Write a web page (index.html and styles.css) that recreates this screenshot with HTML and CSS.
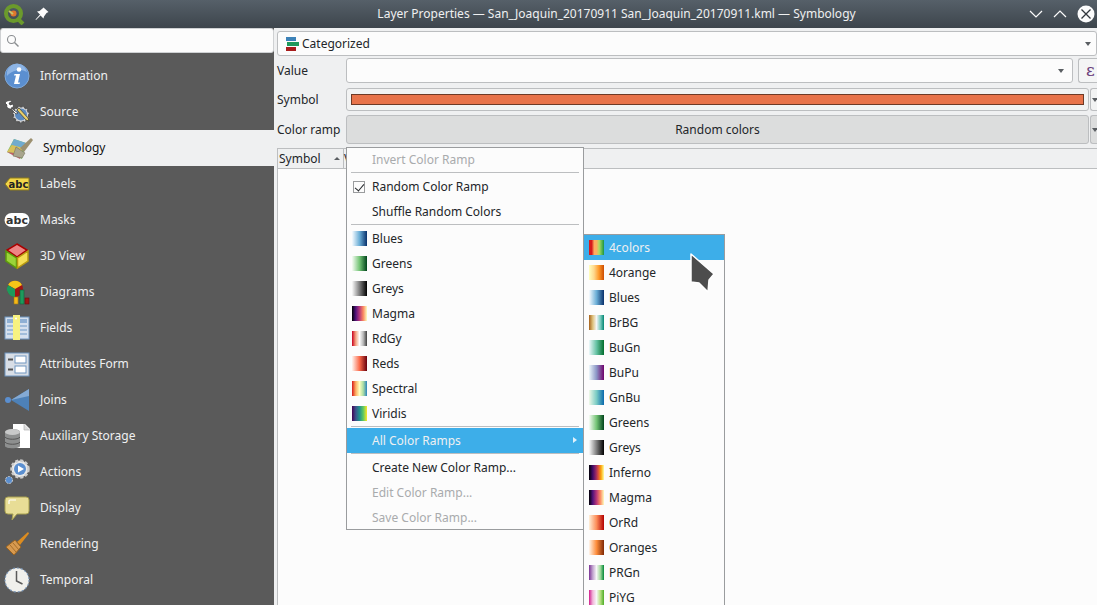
FILE: index.html
```html
<!DOCTYPE html>
<html lang="en">
<head>
<meta charset="utf-8">
<title>Layer Properties</title>
<link rel="stylesheet" href="styles.css">
</head>
<body>
<div class="window">
  <header class="titlebar">
    <div class="tb-left">
      <svg class="qgis" width="22" height="22" viewBox="0 0 22 22"><circle cx="10.500" cy="10.500" r="7.500" fill="none" stroke="#6b9a2c" stroke-width="4"/><path d="M14 15l6 6" stroke="#6b9a2c" stroke-width="4"/><circle cx="10.500" cy="10.500" r="3" fill="#e0762c"/><path d="M6 8l4 3" stroke="#c9c36a" stroke-width="2"/></svg>
      <svg width="16" height="16" viewBox="0 0 16 16"><path d="M9.500 1.500l5 4.500-2 1-2.500 3.500-.5 2-3-3L2 14l-.5-.5L6 8.500l-3-3 2.500-.5 3-2.500z" fill="#fcfcfc"/></svg>
    </div>
    <div class="tb-title">Layer Properties — San_Joaquin_20170911 San_Joaquin_20170911.kml — Symbology</div>
    <div class="tb-right">
      <svg width="14" height="14" viewBox="0 0 14 14"><path d="M1 4l6 6 6-6" fill="none" stroke="#fcfcfc" stroke-width="1.200"/></svg>
      <svg width="14" height="14" viewBox="0 0 14 14"><path d="M1 10l6-6 6 6" fill="none" stroke="#fcfcfc" stroke-width="1.200"/></svg>
      <svg width="18" height="18" viewBox="0 0 18 18"><circle cx="9" cy="9" r="8.500" fill="#fcfcfc"/><path d="M4.500 4.500l9 9M13.500 4.500l-9 9" stroke="#31363b" stroke-width="1.300"/></svg>
    </div>
  </header>
  <div class="body">
    <aside class="sidebar">
      <div class="search">
        <svg width="14" height="14" viewBox="0 0 14 14"><circle cx="5.500" cy="5.500" r="4" fill="none" stroke="#8a8d90" stroke-width="1.100"/><path d="M8.500 8.500l4 4" stroke="#8a8d90" stroke-width="1.500"/></svg>
      </div>
      <nav class="nav">
        <div class="nav-item"><svg class="ic" viewBox="0 0 26 26"><circle cx="13" cy="13" r="12" fill="#5b8fd0" stroke="#7fa8d8"/><path d="M3 13A10 10 0 0 1 23 9 16 16 0 0 0 3 13z" fill="#8db4e4"/><circle cx="15" cy="6.500" r="2.300" fill="#fff"/><path d="M10.500 11h5.500l-2 8.500h2l-.5 1.500h-5.500l2-8.500h-2z" fill="#fff"/></svg><span>Information</span></div>
        <div class="nav-item"><svg class="ic" viewBox="0 0 26 26"><circle cx="17" cy="15.500" r="8" fill="#d6d7d8" stroke="#555" stroke-dasharray="3 1.500" stroke-width="2"/><circle cx="17" cy="15.500" r="6" fill="#5a8ac0"/><path d="M13 11l9 10 3 1-1-3-9-10z" fill="#e8cf6a" stroke="#3a3a30" stroke-width=".7"/><path d="M1 4c2-3 6-3 7-1l-3 1 1 2 3-1c1 2 0 4-2 4L14 14l-2 1-5-5C4 10 2 8 3 6z" fill="#fff" stroke="#333" stroke-width=".7"/></svg><span>Source</span></div>
        <div class="nav-item active"><svg class="ic sym" viewBox="0 0 28 26"><path d="M1 17L8 4l12 4-4 16z" fill="#7fc06a"/><path d="M8 4l12 4-2 6L5 10z" fill="#71abcf"/><path d="M1 17l5-7 11 3-2 6z" fill="#d8c05a"/><path d="M1 17l14 2-1 5z" fill="#c25f66"/><path d="M14 13l11-10 2 2-9 12z" fill="#9c9070"/><path d="M10 12l9 6-3 5-9-2z" fill="#a8a58d" stroke="#77745e" stroke-width=".6"/></svg><span>Symbology</span></div>
        <div class="nav-item"><svg class="ic" viewBox="0 0 26 26"><path d="M1 13l5-6h19v12H6z" fill="#f2d649" stroke="#8c7a1c"/><text x="14.500" y="17" class="ic-text">abc</text></svg><span>Labels</span></div>
        <div class="nav-item"><svg class="ic" viewBox="0 0 26 26"><rect x=".5" y="6" width="25" height="14" rx="7" fill="#fff"/><text x="13" y="17" class="ic-text dark">abc</text></svg><span>Masks</span></div>
        <div class="nav-item"><svg class="ic" viewBox="0 0 26 26"><path d="M13 1l10 6-10 7L3 7z" fill="#ee8585" stroke="#a00" stroke-width="1.500"/><path d="M2 8l10.500 7v10L2 18z" fill="#9bd439" stroke="#5d9a0c" stroke-width="1.500"/><path d="M24 8l-10.500 7v10L24 18z" fill="#f5de55" stroke="#b89a10" stroke-width="1.500"/></svg><span>3D View</span></div>
        <div class="nav-item"><svg class="ic" viewBox="0 0 26 26"><circle cx="11" cy="10" r="8" fill="#a01414"/><path d="M11 10L4 6a8 8 0 0 1 14 0z" fill="#f5c518"/><path d="M11 10v8a8 8 0 0 1-7-12z" fill="#1d9a5c"/><rect x="10" y="18" width="4" height="7" fill="#f5b818" stroke="#a07810" stroke-width=".6"/><rect x="16" y="11" width="4" height="14" fill="#1d9a5c" stroke="#0f6038" stroke-width=".6"/><rect x="21" y="19" width="4" height="6" fill="#a01414" stroke="#601010" stroke-width=".6"/></svg><span>Diagrams</span></div>
        <div class="nav-item"><svg class="ic" viewBox="0 0 26 26"><rect x="1" y="2" width="24" height="22" fill="#d5e0ee" stroke="#6f95bf"/><rect x="3" y="4" width="20" height="4" fill="#8fb0d4"/><path d="M3 11h20M3 15h20M3 19h20" stroke="#8fb0d4" stroke-width="1.500"/><rect x="9" y="0" width="7" height="25" fill="#f7f280"/><circle cx="12" cy="3.500" r="1" fill="#fff"/></svg><span>Fields</span></div>
        <div class="nav-item"><svg class="ic" viewBox="0 0 26 26"><rect x="1" y="2" width="24" height="23" fill="#d8dee6" stroke="#6f95bf"/><rect x="11" y="5" width="11" height="7" fill="#fff" stroke="#6f95bf"/><rect x="11" y="15" width="11" height="7" fill="#fff" stroke="#6f95bf"/><path d="M4 8.500h5M4 18.500h5" stroke="#555" stroke-width="2"/></svg><span>Attributes Form</span></div>
        <div class="nav-item"><svg class="ic" viewBox="0 0 26 26"><circle cx="4" cy="13" r="3" fill="#5b8fd0"/><path d="M7 13L25 2v22z" fill="#4d81b8"/><path d="M7 13L25 2v7z" fill="#84aad4"/></svg><span>Joins</span></div>
        <div class="nav-item"><svg class="ic" viewBox="0 0 26 26"><path d="M9 1h12l5 5v19H9z" fill="#fff"/><path d="M20 1v6h6" fill="#ddd" stroke="#aaa" stroke-width=".6"/><path d="M1 9c0-4 15-4 15 0v14c0 3-15 3-15 0z" fill="#8d8f8f"/><ellipse cx="8.500" cy="9" rx="7.500" ry="3" fill="#c8c9c9"/><path d="M1 14c2 3 13 3 15 0M1 19c2 3 13 3 15 0" fill="none" stroke="#555"/></svg><span>Auxiliary Storage</span></div>
        <div class="nav-item"><svg class="ic" viewBox="0 0 26 26"><circle cx="16" cy="10" r="8.500" fill="#e8e8e8" stroke="#ccc" stroke-width="2.500" stroke-dasharray="3 2"/><circle cx="16" cy="10" r="6" fill="#5b8fd0"/><path d="M14 6.500l6 3.500-6 3.500z" fill="#fff"/><circle cx="5" cy="21" r="3.500" fill="#5b8fd0" stroke="#ccc" stroke-dasharray="2 1"/></svg><span>Actions</span></div>
        <div class="nav-item"><svg class="ic" viewBox="0 0 26 26"><path d="M4 2h18a3 3 0 0 1 3 3v11a3 3 0 0 1-3 3H13l-5 6 1-6H4a3 3 0 0 1-3-3V5a3 3 0 0 1 3-3z" fill="#e8dd96" stroke="#a8a050"/><path d="M5 9V6a1 1 0 0 1 1-1h6" fill="none" stroke="#fff" stroke-width="1.200"/></svg><span>Display</span></div>
        <div class="nav-item"><svg class="ic" viewBox="0 0 26 26"><path d="M13 11L24 1l1 1.500L16 14z" fill="#dc8c20"/><path d="M2 16l9-7 6 7-7 8z" fill="#d89a50" stroke="#9a6420"/><path d="M6 14l6 7M9 12l6 7" stroke="#9a6420" stroke-width=".8"/></svg><span>Rendering</span></div>
        <div class="nav-item"><svg class="ic" viewBox="0 0 26 26"><circle cx="13" cy="13" r="12" fill="#f0f0ec" stroke="#7b97b8" stroke-width="1.200" stroke-dasharray="2 2"/><path d="M12.500 4v10l6 3" fill="none" stroke="#5a5a5a" stroke-width="1.500"/></svg><span>Temporal</span></div>
      </nav>
    </aside>
    <main class="panel">
      <div class="combo render"><svg width="14" height="14" viewBox="0 0 14 14"><rect x="1" y="0" width="10" height="4" fill="#3c82b8"/><rect x="2" y="5" width="12" height="4" fill="#1f9a5c"/><rect x="1" y="10" width="10" height="4" fill="#a81c1c"/></svg><span>Categorized</span><i class="arrow push"></i></div>
      <div class="row">
        <label>Value</label>
        <div class="field"><i class="arrow push"></i></div>
        <div class="expr">ε</div>
      </div>
      <div class="row">
        <label>Symbol</label>
        <div class="field sym-btn"><div class="sym-bar"></div></div>
        <div class="side-arrow"><i class="arrow"></i></div>
      </div>
      <div class="row ramp">
        <label>Color ramp</label>
        <div class="ramp-btn">Random colors</div>
        <div class="side-arrow grey"><i class="arrow"></i></div>
      </div>
      <div class="table">
        <div class="thead"><div class="th-sym">Symbol<i class="sort"></i></div><div class="th-val">Value</div></div>
        <div class="tbody"></div>
      </div>
    </main>
  </div>

  <div class="menu main-menu">
    <div class="mi off"><span>Invert Color Ramp</span></div>
    <div class="sep"></div>
    <div class="mi"><i class="check"></i><span>Random Color Ramp</span></div>
    <div class="mi"><span>Shuffle Random Colors</span></div>
    <div class="sep"></div>
    <div class="mi"><i class="sw blues"></i><span>Blues</span></div>
    <div class="mi"><i class="sw greens"></i><span>Greens</span></div>
    <div class="mi"><i class="sw greys"></i><span>Greys</span></div>
    <div class="mi"><i class="sw magma"></i><span>Magma</span></div>
    <div class="mi"><i class="sw rdgy"></i><span>RdGy</span></div>
    <div class="mi"><i class="sw reds"></i><span>Reds</span></div>
    <div class="mi"><i class="sw spectral"></i><span>Spectral</span></div>
    <div class="mi"><i class="sw viridis"></i><span>Viridis</span></div>
    <div class="sep"></div>
    <div class="mi hot"><span>All Color Ramps</span><i class="more"></i></div>
    <div class="sep"></div>
    <div class="mi"><span>Create New Color Ramp...</span></div>
    <div class="mi off"><span>Edit Color Ramp...</span></div>
    <div class="mi off"><span>Save Color Ramp...</span></div>
  </div>

  <div class="menu sub-menu">
    <div class="mi hot"><i class="sw c4"></i><span>4colors</span></div>
    <div class="mi"><i class="sw o4"></i><span>4orange</span></div>
    <div class="mi"><i class="sw blues"></i><span>Blues</span></div>
    <div class="mi"><i class="sw brbg"></i><span>BrBG</span></div>
    <div class="mi"><i class="sw bugn"></i><span>BuGn</span></div>
    <div class="mi"><i class="sw bupu"></i><span>BuPu</span></div>
    <div class="mi"><i class="sw gnbu"></i><span>GnBu</span></div>
    <div class="mi"><i class="sw greens"></i><span>Greens</span></div>
    <div class="mi"><i class="sw greys"></i><span>Greys</span></div>
    <div class="mi"><i class="sw inferno"></i><span>Inferno</span></div>
    <div class="mi"><i class="sw magma"></i><span>Magma</span></div>
    <div class="mi"><i class="sw orrd"></i><span>OrRd</span></div>
    <div class="mi"><i class="sw oranges"></i><span>Oranges</span></div>
    <div class="mi"><i class="sw prgn"></i><span>PRGn</span></div>
    <div class="mi"><i class="sw piyg"></i><span>PiYG</span></div>
  </div>

  <svg class="cursor" width="26" height="42" viewBox="0 0 26 42"><path d="M2 2v28l8 1 9 9 1-12 5-6z" fill="#4d4d4d" stroke="#fff" stroke-width="1.500" stroke-linejoin="round"/></svg>
</div>
</body>
</html>
```
FILE: styles.css
```css
* { box-sizing: border-box; }
html, body { margin: 0; height: 100%; overflow: hidden; }
body { font: 12px/16px "Noto Sans", sans-serif; color: #232629; background: #eff0f1; }
.window { position: relative; width: 1097px; height: 605px; overflow: hidden; display: flex; flex-direction: column; }

.titlebar { height: 28px; flex: none; display: flex; align-items: center; background: linear-gradient(#566069, #3d454c); color: #eff0f1; padding: 0 2px 0 3px; }
.tb-left { display: flex; align-items: center; gap: 9px; width: 300px; }
.tb-title { flex: 1; text-align: center; padding-right: 99px; white-space: nowrap; }
.tb-right { display: flex; align-items: center; gap: 10px; }

.body { flex: 1; display: flex; min-height: 0; }
.sidebar { width: 274px; flex: none; background: #5a5a5a; display: flex; flex-direction: column; }
.search { height: 25px; background: #fcfcfc; border: 1px solid #cfd1d3; border-radius: 3px; display: flex; align-items: center; padding-left: 5px; margin-bottom: 5px; }
.nav { display: flex; flex-direction: column; }
.nav-item { height: 36px; display: flex; align-items: center; gap: 10px; padding-left: 4px; color: #eff0f1; }
.nav-item.active { background: #eff0f1; color: #111; }
.ic { width: 26px; height: 26px; flex: none; }
.ic.sym { width: 28px; margin-left: 2px; margin-right: -1px; }
.ic-text { font: bold 10px "DejaVu Sans", sans-serif; text-anchor: middle; fill: #222; }
.ic-text.dark { font-size: 11px; fill: #333; }

.panel { flex: 1; min-width: 0; padding: 3px 0 0 3px; display: flex; flex-direction: column; background: #eff0f1; }
.combo { height: 25px; background: #fcfcfc; border: 1px solid #bcbec0; border-radius: 3px; display: flex; align-items: center; gap: 3px; padding: 0 5px 0 7px; margin-right: 0; flex: none; }
.push { margin-left: auto; }
.arrow { display: block; width: 0; height: 0; border: 3px solid transparent; border-top: 4px solid #5a5e62; border-bottom: 0; }

.row { display: flex; align-items: center; height: 29px; flex: none; }
.row:first-of-type { margin-top: 3px; }
.row label { width: 69px; flex: none; }
.field { width: 727px; height: 25px; flex: none; background: #fcfcfc; border: 1px solid #bcbec0; border-radius: 3px; display: flex; align-items: center; padding-right: 8px; }
.expr { width: 30px; height: 25px; margin-left: 5px; flex: none; background: #f4f5f5; border: 1px solid #bcbec0; border-radius: 3px 0 0 3px; border-right: 0; color: #6a3d7a; font: 17px/22px "DejaVu Serif", serif; padding-left: 7px; }
.sym-btn { width: 743px; height: 23px; padding: 0 4px; background: #f2f3f3; }
.sym-bar { flex: 1; height: 11px; background: #e8734a; border: 1px solid #6e3a26; }
.side-arrow { width: 9px; flex: none; height: 23px; margin-left: 1px; border: 1px solid #bcbec0; border-right: 0; border-radius: 3px 0 0 3px; display: flex; align-items: center; padding-left: 1px; background: #f2f3f3; }
.ramp { height: 31px; }
.ramp-btn { width: 743px; height: 29px; flex: none; background: #dcdddd; border: 1px solid #bcbec0; border-radius: 3px; text-align: center; line-height: 27px; }
.side-arrow.grey { height: 29px; background: #dcdddd; }

.table { flex: 1; display: flex; flex-direction: column; margin: 3px 0 0 0; border: 1px solid #bcbec0; border-right: 0; border-bottom: 0; min-height: 0; }
.thead { height: 20px; flex: none; display: flex; background: #eff0f1; border-bottom: 1px solid #bcbec0; }
.th-sym { width: 66px; padding-left: 1px; line-height: 20px; border-right: 1px solid #bcbec0; display: flex; align-items: center; justify-content: space-between; padding-right: 3px; }
.th-val { padding-left: 0; line-height: 20px; }
.sort { display: block; width: 0; height: 0; border: 3px solid transparent; border-bottom: 3px solid #5a5e62; border-top: 0; }
.tbody { flex: 1; background: #fcfcfc; }

.menu { position: absolute; background: #fcfcfc; border: 1px solid #9a9c9e; }
.main-menu { left: 346px; top: 147px; width: 238px; height: 383px; display: flex; flex-direction: column; }
.sub-menu { left: 583px; top: 234px; width: 142px; height: 385px; }
.mi { height: 25px; flex: none; display: flex; align-items: center; padding-left: 25px; position: relative; white-space: nowrap; }
.sub-menu .mi { padding-left: 25px; }
.mi.off { color: #a9abad; }
.mi.hot { background: #3daee9; color: #eff0f1; }
.sep { height: 2px; flex: none; margin: 0 4px; background: linear-gradient(#bcbec0 0 1px, transparent 1px); }
.main-menu .mi:first-child { height: 24px; }
.sw { position: absolute; left: 5px; top: 5px; width: 15px; height: 15px; }
.check { position: absolute; left: 6px; top: 7px; width: 12px; height: 12px; border: 1px solid #9a9c9e; background: #fcfcfc; }
.check::after { content: ""; position: absolute; left: 3px; top: 0; width: 4px; height: 8px; border: solid #232629; border-width: 0 1.500px 1.500px 0; transform: rotate(40deg); }
.more { position: absolute; right: 6px; top: 9px; width: 0; height: 0; border: 3px solid transparent; border-left: 4px solid #dff1fb; border-right: 0; }

.cursor { position: absolute; left: 689px; top: 252px; }

.blues { background: linear-gradient(90deg, #f7fbff, #6baed6 50%, #08306b); }
.greens { background: linear-gradient(90deg, #f7fcf5, #74c476 50%, #00441b); }
.greys { background: linear-gradient(90deg, #fafafa, #000); }
.magma { background: linear-gradient(90deg, #000004, #51127c 25%, #b73779 50%, #fc8961 75%, #fcfdbf); }
.rdgy { background: linear-gradient(90deg, #ca0020, #f4a582 25%, #fff 50%, #bababa 75%, #404040); }
.reds { background: linear-gradient(90deg, #fff5f0, #fb6a4a 50%, #67000d); }
.spectral { background: linear-gradient(90deg, #d7191c, #fdae61 25%, #ffffbf 50%, #abdda4 75%, #2b83ba); }
.viridis { background: linear-gradient(90deg, #440154, #3b528b 25%, #21918c 50%, #5ec962 75%, #fde725); }
.c4 { background: linear-gradient(90deg, #d7191c, #d7191c 18%, #fdae61 35%, #fdae61 50%, #abdd63 68%, #1a9641); }
.o4 { background: linear-gradient(90deg, #ffffbf, #fed98e 33%, #fe9929 66%, #cc4c02); }
.brbg { background: linear-gradient(90deg, #a6611a, #dfc27d 25%, #f5f5f5 50%, #80cdc1 75%, #018571); }
.bugn { background: linear-gradient(90deg, #edf8fb, #66c2a4 50%, #006d2c); }
.bupu { background: linear-gradient(90deg, #edf8fb, #8c96c6 50%, #6e016b); }
.gnbu { background: linear-gradient(90deg, #f0f9e8, #7bccc4 50%, #0868ac); }
.inferno { background: linear-gradient(90deg, #000004, #420a68 25%, #932667 45%, #dd513a 62%, #fca50a 80%, #fcffa4); }
.orrd { background: linear-gradient(90deg, #fef0d9, #fc8d59 50%, #b30000); }
.oranges { background: linear-gradient(90deg, #fff5eb, #fd8d3c 50%, #7f2704); }
.prgn { background: linear-gradient(90deg, #7b3294, #c2a5cf 25%, #f7f7f7 50%, #a6dba0 75%, #008837); }
.piyg { background: linear-gradient(90deg, #d01c8b, #f1b6da 25%, #f7f7f7 50%, #b8e186 75%, #4dac26); }
```
